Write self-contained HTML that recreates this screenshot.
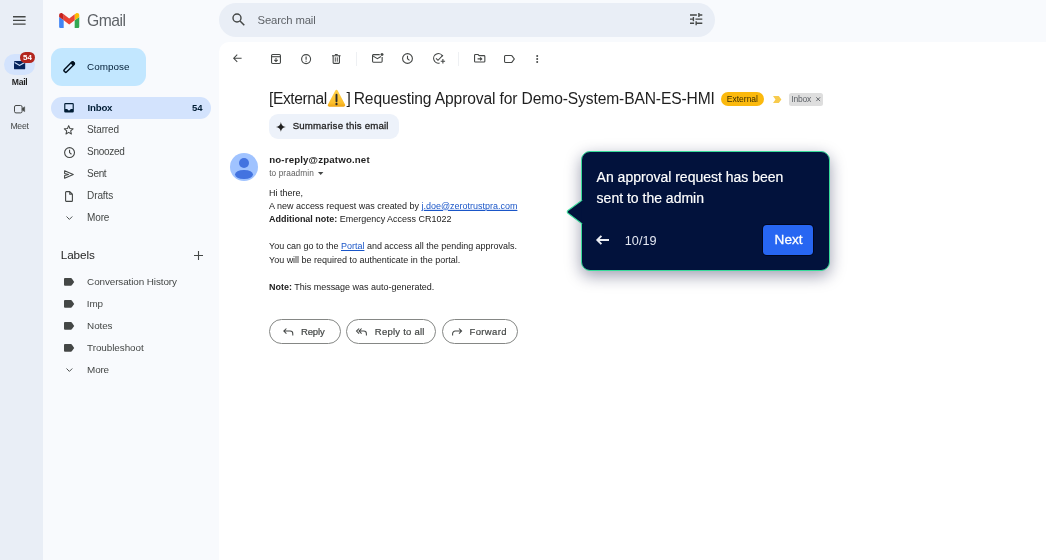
<!DOCTYPE html>
<html>
<head>
<meta charset="utf-8">
<title>Inbox</title>
<style>
*{box-sizing:border-box;margin:0;padding:0}
html,body{width:1046px;height:560px;overflow:hidden}
body{background:#f8fafd;font-family:"Liberation Sans",sans-serif;color:#1f1f1f;position:relative}
.abs{position:absolute}
#rail{left:0;top:0;width:43px;height:560px;background:#e9eef6}
#panel{left:219px;top:42px;width:840px;height:530px;background:#fff;border-radius:10px 0 0 0}
#search{left:219px;top:3.400px;width:496.200px;height:33.200px;border-radius:17px;background:#e9eef6}
.t{position:absolute;white-space:nowrap;line-height:1}
.hl{background:linear-gradient(#fff 82%,#d6e2fb 82%)}
.nav{font-size:9.7px;color:#444746;left:87px;letter-spacing:0}
.lbl{font-size:9.7px;color:#444746;left:87px;letter-spacing:0}
svg{position:absolute;overflow:visible}
a{color:#1a56c8;text-decoration:underline}
.btn{position:absolute;border:1px solid #858785;border-radius:13px;height:25px;background:#fff}
</style>
</head>
<body>
<div id="root" style="position:absolute;left:0;top:0;width:1046px;height:560px;will-change:transform">
<!-- left rail -->
<div id="rail" class="abs"></div>
<svg style="left:13px;top:16px" width="13" height="9" viewBox="0 0 13 9"><path d="M0 0.7h12.6M0 4.4h12.6M0 8.1h12.6" stroke="#444746" stroke-width="1.4" fill="none"/></svg>
<div class="abs" style="left:4px;top:54px;width:30.600px;height:21.200px;border-radius:11px;background:#d3e3fd"></div>
<svg style="left:14px;top:60.600px" width="11.200" height="8.300" viewBox="0 0 11 9" preserveAspectRatio="none"><path d="M1 0h9a1 1 0 0 1 1 1v7a1 1 0 0 1-1 1H1a1 1 0 0 1-1-1V1a1 1 0 0 1 1-1z" fill="#06245c"/><path d="M0.6 1.6L5.5 4.8L10.4 1.6" stroke="#d3e3fd" stroke-width="1.1" fill="none"/></svg>
<div class="abs" style="left:20px;top:52px;width:15px;height:11px;border-radius:6px;background:#b3261e"></div>
<div class="t" style="left:20px;top:53.5px;width:15px;text-align:center;font-size:8px;font-weight:bold;color:#fff">54</div>
<div id="tMail" class="t" style="left:11.8px;top:77.8px;font-size:8.6px;letter-spacing:-0.303px;font-weight:bold;color:#1f1f1f">Mail</div>
<svg style="left:14px;top:104.500px" width="11.200" height="8.400" viewBox="0 0 11.200 8.400"><rect x="0.500" y="0.500" width="7.600" height="7.400" rx="1.500" fill="none" stroke="#444746" stroke-width="1"/><path d="M8.300 3.300L10.700 1.700v5L8.300 5.100z" fill="#444746" stroke="#444746" stroke-width="0.400"/></svg>
<div id="tMeet" class="t" style="left:10.4px;top:121.8px;font-size:8.7px;letter-spacing:-0.290px;color:#444746">Meet</div>

<!-- logo -->
<svg style="left:59px;top:12.5px" width="20.4" height="15.1" viewBox="0 0 88 66">
<path fill="#4285f4" d="M6 66h14V32L0 17v43c0 3.300 2.700 6 6 6"/>
<path fill="#34a853" d="M68 66h14c3.300 0 6-2.700 6-6V17L68 32"/>
<path fill="#fbbc04" d="M68 6v26l20-15V9c0-7.400-8.500-11.600-14.400-7.200"/>
<path fill="#ea4335" d="M20 32V6l24 18 24-18v26L44 50"/>
<path fill="#c5221f" d="M0 9v8l20 15V6l-5.600-4.200C8.500-2.600 0 1.600 0 9"/>
</svg>
<div id="tGmail" class="t" style="left:87.1px;top:13.0px;font-size:15.7px;letter-spacing:-0.520px;color:#5f6368">Gmail</div>

<!-- compose -->
<div class="abs" style="left:51px;top:48px;width:95.300px;height:38px;border-radius:11px;background:#c2e7ff"></div>
<svg style="left:62px;top:59.500px" width="14" height="14" viewBox="0 0 14 14"><g transform="translate(7.150 7.050) rotate(-45)"><rect x="-6.400" y="-1.650" width="12.800" height="3.300" rx="1" fill="none" stroke="#00101f" stroke-width="1.450"/><path d="M3.500 -1.800h2.500a1.100 1.100 0 0 1 1.100 1.100v1.400a1.100 1.100 0 0 1 -1.100 1.100h-2.500z" fill="#00101f"/></g></svg>
<div id="tCompose" class="t" style="left:87.1px;top:61.6px;font-size:9.9px;letter-spacing:0.029px;color:#001d35">Compose</div>

<!-- nav -->
<div class="abs" style="left:51px;top:97px;width:160px;height:22px;border-radius:11px;background:#d3e3fd"></div>
<svg style="left:64px;top:103.200px" width="10" height="9.600" viewBox="0 0 10 10"><path d="M1.200 0h7.600a1.200 1.200 0 0 1 1.200 1.200v7.600a1.200 1.200 0 0 1-1.200 1.200H1.200a1.200 1.200 0 0 1-1.200-1.200V1.200a1.200 1.200 0 0 1 1.200-1.200zM1.200 1.200v5h2.100c0.200 0.900 0.900 1.500 1.700 1.500s1.500-0.600 1.700-1.500h2.100v-5z" fill="#001d35" fill-rule="evenodd"/></svg>
<div id="tInbox" class="t" style="left:87.6px;top:103.0px;font-size:9.7px;letter-spacing:-0.235px;font-weight:bold;color:#001d35">Inbox</div>
<div class="t" style="left:192px;top:103px;font-size:9.500px;font-weight:bold;color:#001d35">54</div>

<svg style="left:63.400px;top:124.100px" width="11.400" height="11.400" viewBox="0 0 24 24"><path d="M12 3.500l2.600 6.100 6.600 0.600-5 4.400 1.500 6.500L12 17.700 6.300 21.100l1.500-6.500-5-4.400 6.600-0.600z" fill="none" stroke="#444746" stroke-width="2.200" stroke-linejoin="round"/></svg>
<div id="tStarred" class="t nav" style="left:87.1px;top:125.3px;font-size:10.0px;letter-spacing:-0.140px">Starred</div>
<svg style="left:63.600px;top:146.600px" width="11.100" height="11.100" viewBox="0 0 22 22"><circle cx="11" cy="11" r="9.800" fill="none" stroke="#444746" stroke-width="2.200"/><path d="M11 5.500V11l3.800 3.400" fill="none" stroke="#444746" stroke-width="2.200"/></svg>
<div id="tSnoozed" class="t nav" style="left:87.1px;top:147.3px;font-size:10.0px;letter-spacing:-0.300px">Snoozed</div>
<svg style="left:64px;top:169.500px" width="10" height="9" viewBox="0 0 20 18"><path d="M1.200 1.500L18.500 9L1.200 16.500V11L9 9L1.200 7z" fill="none" stroke="#444746" stroke-width="2.100" stroke-linejoin="round"/></svg>
<div id="tSent" class="t nav" style="left:87.1px;top:169.3px;font-size:10.0px;letter-spacing:-0.350px">Sent</div>
<svg style="left:65px;top:190.500px" width="8" height="11" viewBox="0 0 16 22"><path d="M1.200 2.500a1.300 1.300 0 0 1 1.300-1.300H9.500L14.800 6.500V19.500a1.300 1.300 0 0 1-1.300 1.300H2.500a1.300 1.300 0 0 1-1.300-1.300zM9.500 1.200V6.500h5.300" fill="none" stroke="#444746" stroke-width="2.200" stroke-linejoin="round"/></svg>
<div id="tDrafts" class="t nav" style="left:87.1px;top:191.3px;font-size:10.0px;letter-spacing:-0.126px">Drafts</div>
<svg style="left:66px;top:216.200px" width="6.800" height="4.250" viewBox="0 0 8 5"><path d="M0.600 0.600L4 4L7.400 0.600" fill="none" stroke="#444746" stroke-width="1.100"/></svg>
<div id="tMore1" class="t nav" style="left:87.1px;top:213.3px;font-size:10.0px;letter-spacing:-0.163px">More</div>

<div id="tLabels" class="t" style="left:60.8px;top:248.9px;font-size:11.7px;letter-spacing:-0.100px;color:#1f1f1f">Labels</div>
<svg style="left:194px;top:251px" width="9" height="9" viewBox="0 0 9 9"><path d="M4.500 0v9M0 4.500h9" stroke="#444746" stroke-width="1.100"/></svg>

<svg style="left:64px;top:277.8px" width="10.600" height="7.900" viewBox="0 0 11 8"><path d="M1 0h6.200c0.400 0 0.700 0.200 0.900 0.500L10.600 4 8.100 7.500c-0.200 0.300-0.500 0.500-0.900 0.500H1a1 1 0 0 1-1-1V1a1 1 0 0 1 1-1z" fill="#444746"/></svg>
<div id="tConv" class="t lbl" style="left:87.1px;top:277.3px;font-size:9.9px;letter-spacing:-0.094px">Conversation History</div>
<svg style="left:64px;top:299.8px" width="10.600" height="7.900" viewBox="0 0 11 8"><path d="M1 0h6.200c0.400 0 0.700 0.200 0.900 0.500L10.600 4 8.100 7.500c-0.200 0.300-0.500 0.500-0.900 0.500H1a1 1 0 0 1-1-1V1a1 1 0 0 1 1-1z" fill="#444746"/></svg>
<div id="tImp" class="t lbl" style="left:86.8px;top:299.3px;font-size:9.9px;letter-spacing:-0.100px">Imp</div>
<svg style="left:64px;top:321.8px" width="10.600" height="7.900" viewBox="0 0 11 8"><path d="M1 0h6.200c0.400 0 0.700 0.200 0.900 0.500L10.600 4 8.100 7.500c-0.200 0.300-0.500 0.500-0.900 0.500H1a1 1 0 0 1-1-1V1a1 1 0 0 1 1-1z" fill="#444746"/></svg>
<div id="tNotes" class="t lbl" style="left:87.1px;top:321.3px;font-size:9.9px;letter-spacing:-0.085px">Notes</div>
<svg style="left:64px;top:343.8px" width="10.600" height="7.900" viewBox="0 0 11 8"><path d="M1 0h6.200c0.400 0 0.700 0.200 0.900 0.500L10.600 4 8.100 7.500c-0.200 0.300-0.500 0.500-0.900 0.500H1a1 1 0 0 1-1-1V1a1 1 0 0 1 1-1z" fill="#444746"/></svg>
<div id="tTroub" class="t lbl" style="left:87.1px;top:343.3px;font-size:9.9px;letter-spacing:-0.064px">Troubleshoot</div>
<svg style="left:66px;top:367.800px" width="6.800" height="4.250" viewBox="0 0 8 5"><path d="M0.600 0.600L4 4L7.400 0.600" fill="none" stroke="#444746" stroke-width="1.100"/></svg>
<div id="tMore2" class="t lbl" style="left:87.1px;top:365.3px;font-size:9.9px;letter-spacing:-0.163px">More</div>

<!-- search -->
<div id="search" class="abs"></div>
<svg style="left:232px;top:13px" width="13" height="13" viewBox="0 0 13 13"><circle cx="5" cy="5" r="4" fill="none" stroke="#444746" stroke-width="1.400"/><path d="M8 8l4.300 4.300" stroke="#444746" stroke-width="1.500"/></svg>
<div id="tSearch" class="t" style="left:257.6px;top:14.5px;font-size:11.3px;letter-spacing:-0.155px;color:#5f6368">Search mail</div>
<svg style="left:689.900px;top:13.200px" width="12.300" height="12.300" viewBox="3 3 18 18"><path d="M3 17v2h6v-2H3zM3 5v2h10V5H3zm10 16v-2h8v-2h-8v-2h-2v6h2zM7 9v2H3v2h4v2h2V9H7zm14 4v-2H11v2h10zm-6-4h2V7h4V5h-4V3h-2v6z" fill="#444746"/></svg>

<!-- panel -->
<div id="panel" class="abs"></div>

<!-- toolbar -->
<svg style="left:232.800px;top:54.300px" width="8.600" height="8.500" viewBox="0 0 9.500 9"><path d="M9.500 4.500H1.200M4.700 0.600L0.800 4.500L4.700 8.400" fill="none" stroke="#444746" stroke-width="1.150"/></svg>
<!-- archive -->
<svg style="left:271px;top:53.500px" width="10" height="10" viewBox="0 0 10 10"><rect x="0.550" y="0.550" width="8.900" height="8.900" rx="1.100" fill="none" stroke="#444746" stroke-width="1.100"/><path d="M0.600 2.700h8.800" stroke="#444746" stroke-width="1.100"/><path d="M5 3.900v3.600M3.300 5.900L5 7.600L6.700 5.900" fill="none" stroke="#444746" stroke-width="1.050"/></svg>
<!-- spam -->
<svg style="left:301px;top:53.500px" width="10.200" height="10.200" viewBox="0 0 10.200 10.200"><circle cx="5.100" cy="5.100" r="4.500" fill="none" stroke="#444746" stroke-width="1.100"/><path d="M5.100 2.600v3.100M5.100 6.700v1.100" stroke="#444746" stroke-width="1.150"/></svg>
<!-- trash -->
<svg style="left:332px;top:53.500px" width="8.600" height="10" viewBox="0 0 8.600 10"><path d="M0 1.700h8.600M2.900 0.550h2.800" stroke="#444746" stroke-width="1.100"/><path d="M1.150 1.700v6.900a0.800 0.800 0 0 0 0.800 0.800h4.700a0.800 0.800 0 0 0 0.800-0.800V1.700" fill="none" stroke="#444746" stroke-width="1.100"/><path d="M3.300 3.300v4.400M5.300 3.300v4.400" stroke="#444746" stroke-width="0.950"/></svg>
<div class="abs" style="left:356px;top:51.500px;width:1px;height:14px;background:#eef0f3"></div>
<!-- mark unread -->
<svg style="left:372px;top:53px" width="11.600" height="9.800" viewBox="0 0 11.600 9.800"><path d="M7.700 1.600H1.400a0.850 0.850 0 0 0-0.850 0.850v5.900a0.850 0.850 0 0 0 0.850 0.850h7.900a0.850 0.850 0 0 0 0.850-0.850V4.100" fill="none" stroke="#444746" stroke-width="1.100"/><path d="M0.800 2.900L5.350 5.700L9 3.500" fill="none" stroke="#444746" stroke-width="1.050"/><circle cx="10" cy="1.500" r="1.500" fill="#444746"/></svg>
<!-- snooze -->
<svg style="left:402.400px;top:53.100px" width="11" height="11" viewBox="0 0 11 11"><circle cx="5.500" cy="5.500" r="4.900" fill="none" stroke="#444746" stroke-width="1.100"/><path d="M5.500 2.700v3l2 1.700" fill="none" stroke="#444746" stroke-width="1.100"/></svg>
<!-- add task -->
<svg style="left:433px;top:53.100px" width="12.200" height="11" viewBox="0 0 12.200 11"><path d="M9.600 3.200A4.750 4.750 0 1 0 6.600 9.950" fill="none" stroke="#444746" stroke-width="1.100"/><path d="M3 5.300l2 2 5-5.200" fill="none" stroke="#444746" stroke-width="1.100"/><path d="M9.900 6v4.400M7.700 8.200h4.400" stroke="#444746" stroke-width="1.100"/></svg>
<div class="abs" style="left:458px;top:51.500px;width:1px;height:14px;background:#eef0f3"></div>
<!-- move to -->
<svg style="left:474px;top:54.300px" width="11.400" height="8.600" viewBox="0 0 11.400 8.600"><path d="M0.550 1.400a0.850 0.850 0 0 1 0.850-0.850h2.700l1.100 1.100h4.800a0.850 0.850 0 0 1 0.850 0.850v4.700a0.850 0.850 0 0 1-0.850 0.850H1.400a0.850 0.850 0 0 1-0.850-0.850z" fill="none" stroke="#444746" stroke-width="1.100"/><path d="M3.600 4.900h4M6.200 3.300l1.600 1.600-1.600 1.600" fill="none" stroke="#444746" stroke-width="1.050"/></svg>
<!-- label -->
<svg style="left:504.400px;top:54.600px" width="11" height="8" viewBox="0 0 11 8"><path d="M1.400 0.550h5.900c0.300 0 0.550 0.150 0.700 0.350L10.300 4 8 7.100c-0.150 0.200-0.400 0.350-0.700 0.350H1.400a0.850 0.850 0 0 1-0.850-0.850V1.400a0.850 0.850 0 0 1 0.850-0.850z" fill="none" stroke="#444746" stroke-width="1.100"/></svg>
<!-- more -->
<svg style="left:536.200px;top:54.500px" width="2.400" height="8.200" viewBox="0 0 2.400 8.200"><circle cx="1.200" cy="1.100" r="1" fill="#444746"/><circle cx="1.200" cy="4.100" r="1" fill="#444746"/><circle cx="1.200" cy="7.100" r="1" fill="#444746"/></svg>

<!-- subject -->
<div class="t" id="subj" style="left:269px;top:91px;font-size:15.600px;color:#1f1f1f;letter-spacing:-0.119px"><span id="sA" style="letter-spacing:-0.400px">[External</span><span id="sSp" style="display:inline-block;width:19.600px"></span><span id="sB" style="letter-spacing:-0.750px">] </span><span id="sC">Requesting Approval for Demo-System-BAN-ES-HMI</span></div>
<svg style="left:326.900px;top:88.600px" width="19" height="18.300" viewBox="0 0 19 17" preserveAspectRatio="none"><defs><linearGradient id="wg" x1="0" y1="0" x2="0" y2="1"><stop offset="0" stop-color="#ffd04a"/><stop offset="0.780" stop-color="#fcbf2c"/><stop offset="1" stop-color="#eea312"/></linearGradient></defs><path d="M9.500 0.800c0.500 0 0.900 0.250 1.150 0.700l7.400 13c0.500 0.900-0.100 1.900-1.150 1.900H2.100c-1.050 0-1.650-1-1.150-1.900l7.400-13c0.250-0.450 0.650-0.700 1.150-0.700z" fill="url(#wg)"/><path d="M9.500 5.300v6" stroke="#2b2b2b" stroke-width="1.900" stroke-linecap="round"/><circle cx="9.500" cy="13.900" r="1.100" fill="#2b2b2b"/></svg>
<div class="abs" style="left:721.300px;top:92.300px;width:43px;height:13.800px;border-radius:7px;background:#fbb90d"></div>
<div id="tExt" class="t" style="left:726.8px;top:94.8px;font-size:8.5px;letter-spacing:0.000px;color:#3b2c00">External</div>
<svg style="left:772.800px;top:95.700px" width="8.400" height="7" viewBox="0 0 8.400 7"><path d="M0 0h5.300c0.300 0 0.550 0.150 0.700 0.350L8.400 3.500 6 6.650c-0.150 0.200-0.400 0.350-0.700 0.350H0l2.500-3.500z" fill="#f7cb4d"/></svg>
<div class="abs" style="left:789.100px;top:93px;width:34.400px;height:12.500px;border-radius:2.500px;background:#dedede"></div>
<div id="tInboxChip" class="t" style="left:791.3px;top:95.2px;font-size:8.5px;letter-spacing:-0.200px;color:#5f6368">Inbox</div>
<svg style="left:816px;top:97.400px" width="4.400" height="4.400" viewBox="0 0 4.400 4.400"><path d="M0.300 0.300l3.800 3.800M4.100 0.300L0.300 4.100" stroke="#5f6368" stroke-width="0.950"/></svg>

<!-- summarise chip -->
<div class="abs" style="left:269px;top:114.200px;width:130px;height:25px;border-radius:9px;background:#edf2fa"></div>
<svg style="left:275.800px;top:122.200px" width="9.800" height="9.800" viewBox="0 0 10 10"><path d="M5 0C5.350 3 7 4.650 10 5 7 5.350 5.350 7 5 10 4.650 7 3 5.350 0 5 3 4.650 4.650 3 5 0z" fill="#1f1f1f"/></svg>
<div id="tSumm" class="t" style="left:292.7px;top:120.7px;font-size:9.7px;letter-spacing:0.168px;-webkit-text-stroke:0.280px #1f1f1f;color:#1f1f1f">Summarise this email</div>

<!-- sender -->
<div class="abs" style="left:230px;top:152.700px;width:28px;height:28px;border-radius:14px;background:#a0c3ff;overflow:hidden"><div class="abs" style="left:9.200px;top:5.400px;width:9.600px;height:9.600px;border-radius:5px;background:#4373e0"></div><div class="abs" style="left:5px;top:17.300px;width:18px;height:9.400px;border-radius:9px / 4.700px;background:#4373e0"></div></div>
<div id="tSender" class="t" style="left:269.2px;top:155.4px;font-size:9.7px;letter-spacing:0.152px;font-weight:bold;color:#1f1f1f">no-reply@zpatwo.net</div>
<div id="tTo" class="t" style="left:269.2px;top:168.8px;font-size:8.3px;letter-spacing:0.079px;color:#5e5e5e">to praadmin</div>
<svg style="left:318.200px;top:172.300px" width="5.400" height="2.900" viewBox="0 0 5.400 2.900"><path d="M0 0h5.400L2.700 2.900z" fill="#444746"/></svg>

<!-- body -->
<div class="abs" id="body" style="left:269px;top:0;font-size:8.970px;line-height:13.450px;color:#222;white-space:nowrap">
<div class="abs" style="top:186.500px">Hi there,</div>
<div class="abs" style="top:199.500px">A new access request was created by <a class="hl">j.doe@zerotrustpra.com</a></div>
<div class="abs" style="top:212.500px"><b>Additional note:</b> Emergency Access CR1022</div>
<div class="abs" style="top:239.500px">You can go to the <a>Portal</a> and access all the pending approvals.</div>
<div class="abs" style="top:253.500px">You will be required to authenticate in the portal.</div>
<div class="abs" style="top:280.500px"><b>Note:</b> This message was auto-generated.</div>
</div>

<!-- buttons -->
<div class="btn" style="left:269px;top:319px;width:72px"></div>
<svg style="left:282.700px;top:328.400px" width="10.400" height="7.600" viewBox="0 0 10.400 7.600"><path d="M3.400 0.500L0.800 3.100L3.400 5.700M0.800 3.100h6.400a2.600 2.600 0 0 1 2.600 2.600v1.900" fill="none" stroke="#444746" stroke-width="1.050"/></svg>
<div id="tReply" class="t" style="left:300.9px;top:327.4px;font-size:9.5px;letter-spacing:-0.121px;color:#444746;-webkit-text-stroke:0.200px #444746">Reply</div>
<div class="btn" style="left:346px;top:319px;width:90px"></div>
<svg style="left:356.300px;top:328.400px" width="11" height="7.600" viewBox="0 0 11 7.600"><path d="M5.600 0.500L3 3.100L5.600 5.700M3 3.100h4.800a2.600 2.600 0 0 1 2.600 2.600v1.900M3.100 0.500L0.500 3.100L3.100 5.700" fill="none" stroke="#444746" stroke-width="1.050"/></svg>
<div id="tReplyAll" class="t" style="left:374.8px;top:327.4px;font-size:9.5px;letter-spacing:0.241px;color:#444746;-webkit-text-stroke:0.200px #444746">Reply to all</div>
<div class="btn" style="left:441.500px;top:319px;width:76.600px"></div>
<svg style="left:451.800px;top:328.400px" width="10.400" height="7.600" viewBox="0 0 10.400 7.600"><path d="M7 0.500L9.600 3.100L7 5.700M9.600 3.100H3.200a2.600 2.600 0 0 0-2.600 2.600v1.900" fill="none" stroke="#444746" stroke-width="1.050"/></svg>
<div id="tFwd" class="t" style="left:469.6px;top:327.4px;font-size:9.5px;letter-spacing:0.333px;color:#444746;-webkit-text-stroke:0.200px #444746">Forward</div>

<!-- tooltip -->
<div class="abs" id="tip" style="left:581px;top:151.300px;width:249px;height:120.200px;border-radius:9px;background:#02123c;border:1.300px solid #38dc9a;box-shadow:0 5px 16px rgba(10,15,60,0.400)"></div>
<svg style="left:566px;top:199px" width="17" height="26" viewBox="0 0 17 26"><path d="M16.200 1.100L2 11.500a1.700 1.700 0 0 0 0 2.800L16.200 24.900" fill="#02123c" stroke="#38dc9a" stroke-width="1.100"/><path d="M15.400 2.800V23.200h1.600V2.800z" fill="#02123c"/></svg>
<div class="t" style="left:596.600px;top:166.500px;font-size:14px;line-height:21.200px;color:#fff;-webkit-text-stroke:0.180px #fff;white-space:nowrap">An approval request has been<br>sent to the admin</div>
<svg style="left:596px;top:235.400px" width="13" height="10" viewBox="0 0 13 10"><path d="M13 5H1.800M5.400 0.900L1.300 5L5.400 9.100" fill="none" stroke="#eceef4" stroke-width="1.900"/></svg>
<div id="t1019" class="t" style="left:624.800px;top:234.700px;font-size:12.700px;color:#e3e7f2">10/19</div>
<div class="abs" style="left:763.200px;top:224.800px;width:50.200px;height:30.200px;border-radius:3.800px;background:#2766f2;box-shadow:0 0 0 0.900px #00061f"></div>
<div id="tNext" class="t" style="left:774.600px;top:233.300px;font-size:13.600px;color:#fff;-webkit-text-stroke:0.300px #fff">Next</div>
</div>
</body>
</html>
